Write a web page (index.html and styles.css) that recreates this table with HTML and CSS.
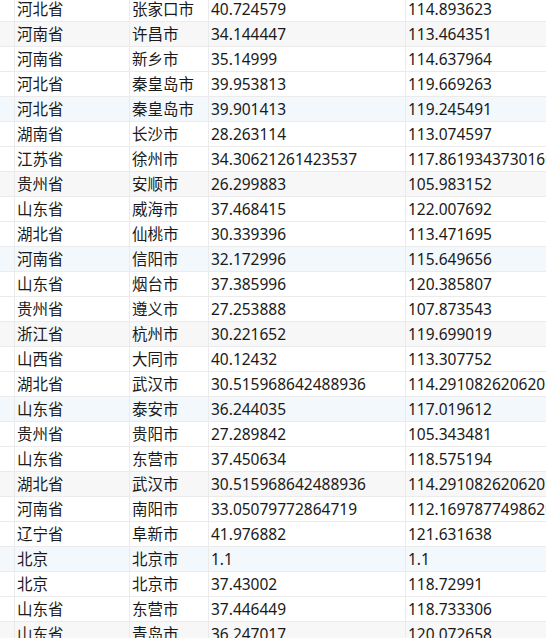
FILE: index.html
```html
<!DOCTYPE html>
<html lang="zh">
<head>
<meta charset="utf-8">
<link rel="stylesheet" href="styles.css">
</head>
<body>
<div class="grid">
<div class="rows">
  <div class="row"><div class="c"></div><div class="c">河北省</div><div class="c">张家口市</div><div class="c">40.724579</div><div class="c">114.893623</div></div>
  <div class="row gray"><div class="c"></div><div class="c">河南省</div><div class="c">许昌市</div><div class="c">34.144447</div><div class="c">113.464351</div></div>
  <div class="row"><div class="c"></div><div class="c">河南省</div><div class="c">新乡市</div><div class="c">35.14999</div><div class="c">114.637964</div></div>
  <div class="row"><div class="c"></div><div class="c">河北省</div><div class="c">秦皇岛市</div><div class="c">39.953813</div><div class="c">119.669263</div></div>
  <div class="row blue"><div class="c"></div><div class="c">河北省</div><div class="c">秦皇岛市</div><div class="c">39.901413</div><div class="c">119.245491</div></div>
  <div class="row"><div class="c"></div><div class="c">湖南省</div><div class="c">长沙市</div><div class="c">28.263114</div><div class="c">113.074597</div></div>
  <div class="row"><div class="c"></div><div class="c">江苏省</div><div class="c">徐州市</div><div class="c">34.30621261423537</div><div class="c">117.86193437301601</div></div>
  <div class="row gray"><div class="c"></div><div class="c">贵州省</div><div class="c">安顺市</div><div class="c">26.299883</div><div class="c">105.983152</div></div>
  <div class="row"><div class="c"></div><div class="c">山东省</div><div class="c">威海市</div><div class="c">37.468415</div><div class="c">122.007692</div></div>
  <div class="row"><div class="c"></div><div class="c">湖北省</div><div class="c">仙桃市</div><div class="c">30.339396</div><div class="c">113.471695</div></div>
  <div class="row blue"><div class="c"></div><div class="c">河南省</div><div class="c">信阳市</div><div class="c">32.172996</div><div class="c">115.649656</div></div>
  <div class="row"><div class="c"></div><div class="c">山东省</div><div class="c">烟台市</div><div class="c">37.385996</div><div class="c">120.385807</div></div>
  <div class="row"><div class="c"></div><div class="c">贵州省</div><div class="c">遵义市</div><div class="c">27.253888</div><div class="c">107.873543</div></div>
  <div class="row gray"><div class="c"></div><div class="c">浙江省</div><div class="c">杭州市</div><div class="c">30.221652</div><div class="c">119.699019</div></div>
  <div class="row"><div class="c"></div><div class="c">山西省</div><div class="c">大同市</div><div class="c">40.12432</div><div class="c">113.307752</div></div>
  <div class="row"><div class="c"></div><div class="c">湖北省</div><div class="c">武汉市</div><div class="c">30.515968642488936</div><div class="c">114.29108262062011</div></div>
  <div class="row blue"><div class="c"></div><div class="c">山东省</div><div class="c">泰安市</div><div class="c">36.244035</div><div class="c">117.019612</div></div>
  <div class="row"><div class="c"></div><div class="c">贵州省</div><div class="c">贵阳市</div><div class="c">27.289842</div><div class="c">105.343481</div></div>
  <div class="row"><div class="c"></div><div class="c">山东省</div><div class="c">东营市</div><div class="c">37.450634</div><div class="c">118.575194</div></div>
  <div class="row gray"><div class="c"></div><div class="c">湖北省</div><div class="c">武汉市</div><div class="c">30.515968642488936</div><div class="c">114.29108262062011</div></div>
  <div class="row"><div class="c"></div><div class="c">河南省</div><div class="c">南阳市</div><div class="c">33.05079772864719</div><div class="c">112.16978774986203</div></div>
  <div class="row"><div class="c"></div><div class="c">辽宁省</div><div class="c">阜新市</div><div class="c">41.976882</div><div class="c">121.631638</div></div>
  <div class="row blue"><div class="c"></div><div class="c">北京</div><div class="c">北京市</div><div class="c">1.1</div><div class="c">1.1</div></div>
  <div class="row"><div class="c"></div><div class="c">北京</div><div class="c">北京市</div><div class="c">37.43002</div><div class="c">118.72991</div></div>
  <div class="row"><div class="c"></div><div class="c">山东省</div><div class="c">东营市</div><div class="c">37.446449</div><div class="c">118.733306</div></div>
  <div class="row gray"><div class="c"></div><div class="c">山东省</div><div class="c">青岛市</div><div class="c">36.247017</div><div class="c">120.072658</div></div>
</div>
</div>
</body>
</html>
```
FILE: styles.css
```css
html, body {
  margin: 0;
  padding: 0;
  background: #ffffff;
  overflow: hidden;
}
.grid {
  width: 546px;
  height: 638px;
  overflow: hidden;
  font-family: "Noto Sans", "Noto Sans CJK SC", sans-serif;
  font-size: 15.5px;
  color: #1a1a1a;
}
.rows {
  margin-top: -3px;
  width: 760px;
}
.row {
  display: grid;
  grid-template-columns: 15px 115px 79px 197px 354px;
  height: 25px;
  box-sizing: border-box;
  border-bottom: 1px solid #ebebeb;
  background: #ffffff;
}
.row.gray { background: #f7f7f7; }
.row.blue { background: #f3f8fd; }
.c {
  box-sizing: border-box;
  border-right: 1px solid #ebebeb;
  padding-left: 2px;
  line-height: 24px;
  white-space: nowrap;
  overflow: hidden;
}
```
